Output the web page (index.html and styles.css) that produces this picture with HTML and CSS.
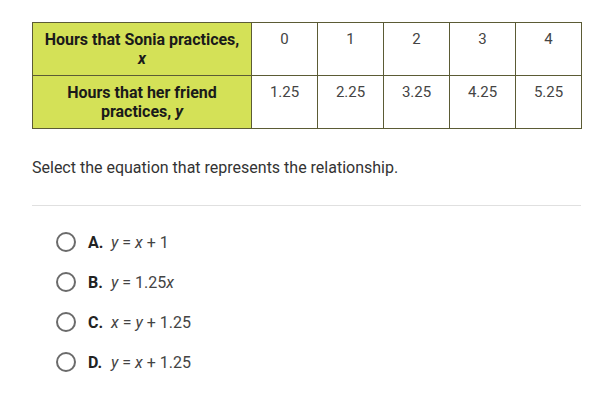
FILE: index.html
```
<!DOCTYPE html>
<html>
<head>
<meta charset="utf-8">
<link rel="stylesheet" href="styles.css">
</head>
<body>
<div class="page">
  <table class="data">
    <tr>
      <th>Hours that Sonia practices,<br><i>x</i></th>
      <td>0</td><td>1</td><td>2</td><td>3</td><td>4</td>
    </tr>
    <tr>
      <th>Hours that her friend<br>practices, <i>y</i></th>
      <td>1.25</td><td>2.25</td><td>3.25</td><td>4.25</td><td>5.25</td>
    </tr>
  </table>
  <p class="prompt">Select the equation that represents the relationship.</p>
  <hr class="rule">
  <ul class="options">
    <li><span class="radio"></span><b>A.</b><span class="eq"><i>y</i> = <i>x</i> + 1</span></li>
    <li><span class="radio"></span><b>B.</b><span class="eq"><i>y</i> = 1.25<i>x</i></span></li>
    <li><span class="radio"></span><b>C.</b><span class="eq"><i>x</i> = <i>y</i> + 1.25</span></li>
    <li><span class="radio"></span><b>D.</b><span class="eq"><i>y</i> = <i>x</i> + 1.25</span></li>
  </ul>
</div>
</body>
</html>
```
FILE: styles.css
```
html, body { margin: 0; padding: 0; background: #fff; }
body { font-family: Roboto, "Liberation Sans", sans-serif; color: #333; }
.page { padding: 22px 12px 0 32px; width: 549px; }
.data { border-collapse: collapse; width: 550px; table-layout: fixed; }
.data th, .data td { border: 1px solid #5b5b35; vertical-align: top; text-align: center; height: 53px; box-sizing: border-box; padding: 7px 2px 0; line-height: 19px; font-size: 15px; }
.data th { width: 219px; background: #d4e157; color: #1a1a1a; font-weight: 700; font-size: 16px; }
.data td { color: #444; }
.prompt { margin: 29px 0 0; font-size: 16px; line-height: 20px; color: #333; }
.rule { margin: 27px 0 0; border: 0; border-top: 1px solid #e0e0e0; height: 0; }
.options { list-style: none; margin: 0; padding: 24px 0 0 24px; }
.options li { display: flex; align-items: center; height: 40px; font-size: 16px; }
.options li:first-child { margin-top: -8px; }
.radio { width: 16px; height: 16px; border: 2px solid #6b6b6b; border-radius: 50%; margin-right: 12px; flex: none; }
.options b { font-weight: 700; color: #222; width: 23px; }
.eq { color: #444; }
```
